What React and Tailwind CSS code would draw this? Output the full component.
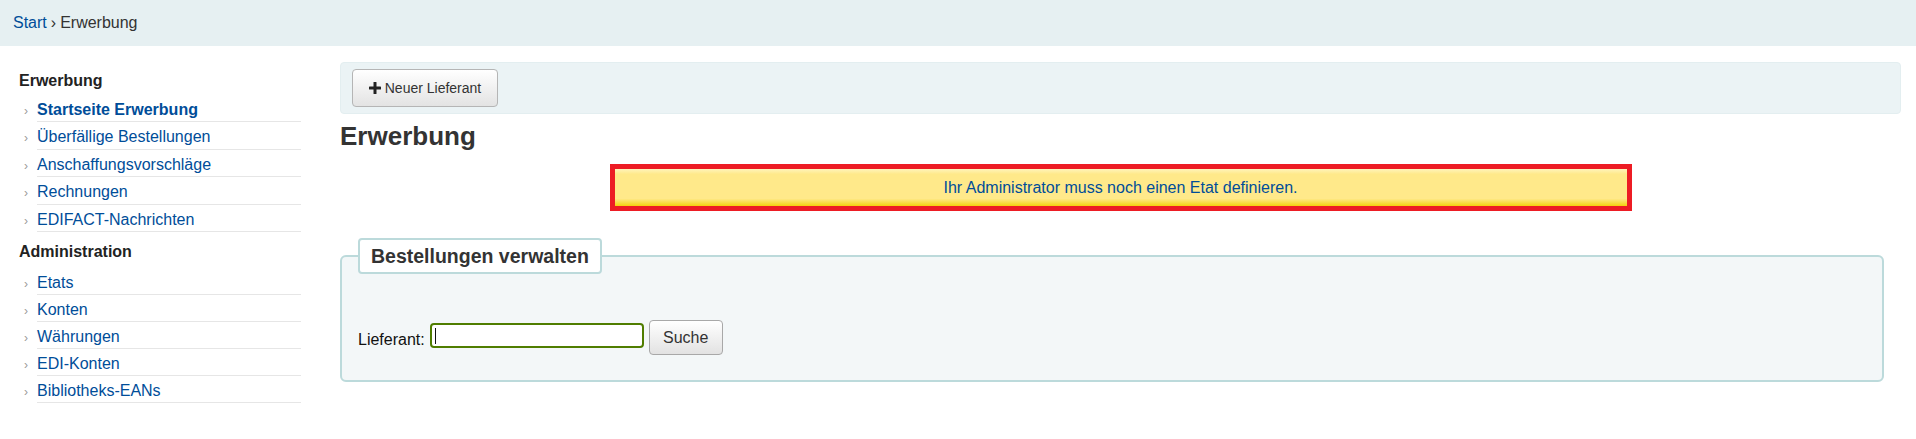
import React from "react";

const acqLinks = [
    { label: "Startseite Erwerbung", active: true },
    { label: "Überfällige Bestellungen" },
    { label: "Anschaffungsvorschläge" },
    { label: "Rechnungen" },
    { label: "EDIFACT-Nachrichten" },
];

const adminLinks = [
    { label: "Etats" },
    { label: "Konten" },
    { label: "Währungen" },
    { label: "EDI-Konten" },
    { label: "Bibliotheks-EANs" },
];

const NavList = ({ items, rowClass }) => (
    <ul>
        {items.map((item) => (
            <li key={item.label} className="flex">
                <span className="w-[18px] pl-[5px] pt-[7px] text-[12px] leading-[18px] text-[#9a9a9a]">›</span>
                <a
                    href="#"
                    className={`flex-1 border-b border-[#e6e6e6] pt-[6px] leading-[18px] text-[#004d99] ${rowClass} ${item.active ? "font-bold" : ""}`}
                >
                    {item.label}
                </a>
            </li>
        ))}
    </ul>
);

const App = () => {
    return (
        <div className="min-h-[439px] bg-white text-[16px] text-[#333] font-['Liberation_Sans',Arial,sans-serif]">
            {/* breadcrumbs */}
            <div className="flex h-[46px] items-center bg-[#e6f0f2] px-[13px]">
                <a href="#" className="text-[#004d99]">Start</a>
                <span className="px-[4px]">›</span>
                <span>Erwerbung</span>
            </div>

            <div className="flex">
                {/* sidebar */}
                <aside className="w-[301px] shrink-0 pl-[19px] pt-[26px]">
                    <h5 className="font-bold leading-[18px] text-[#222]">Erwerbung</h5>
                    <div className="mt-[4.5px]">
                        <NavList items={acqLinks} rowClass="h-[27.5px]" />
                    </div>
                    <h5 className="mt-[11px] font-bold leading-[18px] text-[#222]">Administration</h5>
                    <div className="mt-[7px]">
                        <NavList items={adminLinks} rowClass="h-[27px]" />
                    </div>
                </aside>

                {/* main */}
                <main className="ml-[39px] flex-1 pr-[15px] pt-[16px]">
                    <div className="flex h-[52px] items-center rounded-[4px] border border-[#e3eef0] bg-[#ebf3f5] px-[11px]">
                        <button className="flex h-[38px] w-[146px] items-center justify-center gap-[4px] rounded-[4px] border border-[#b5b5b5] bg-linear-to-b from-white to-[#e3e3e3] text-[14px] text-[#333]">
                            <svg width="12" height="12" viewBox="0 0 12 12">
                                <rect x="4.5" y="0" width="3" height="12" rx="0.6" fill="#222" />
                                <rect x="0" y="4.5" width="12" height="3" rx="0.6" fill="#222" />
                            </svg>
                            Neuer Lieferant
                        </button>
                    </div>

                    <h1 className="mt-[7px] text-[26px] font-bold leading-[30px] text-[#333]">Erwerbung</h1>

                    <div className="mx-auto mt-[13px] w-[1022px] border-[5px] border-[#ed1c24]">
                        <div className="flex h-[37px] items-center justify-center bg-[linear-gradient(to_bottom,#fff4bb_0%,#ffe98a_14%,#ffe98a_80%,#f3d30d_100%)] text-[#004d99]">
                            Ihr Administrator muss noch einen Etat definieren.
                        </div>
                    </div>

                    <fieldset className="mr-[17px] mt-[27px] rounded-[6px] border-2 border-[#bcdadb] bg-[#f3f7f8] px-[16px] pb-[25px] pt-[46px]">
                        <legend className="rounded-[4px] border-2 border-[#bcdadb] bg-white px-[11px] text-[19.5px] font-bold leading-[32px] text-[#333]">
                            Bestellungen verwalten
                        </legend>
                        <div className="flex items-start">
                            <label htmlFor="supplier" className="mt-[10.5px] leading-[18px] text-[#111]">Lieferant:</label>
                            <div className="relative ml-[5px] mt-[3px] h-[25px] w-[214px] rounded-[4px] border-2 border-[#4f7d00] bg-white">
                                <span className="absolute left-[3px] top-[3px] h-[16px] w-[1px] bg-[#111]"></span>
                                <input id="supplier" type="text" className="h-full w-full bg-transparent pl-[6px] outline-none" />
                            </div>
                            <button className="ml-[5px] h-[35px] w-[74px] rounded-[4px] border border-[#a8a8a8] bg-linear-to-b from-white to-[#e2e2e2] text-[#333]">
                                Suche
                            </button>
                        </div>
                    </fieldset>
                </main>
            </div>
        </div>
    );
};

export default App;
